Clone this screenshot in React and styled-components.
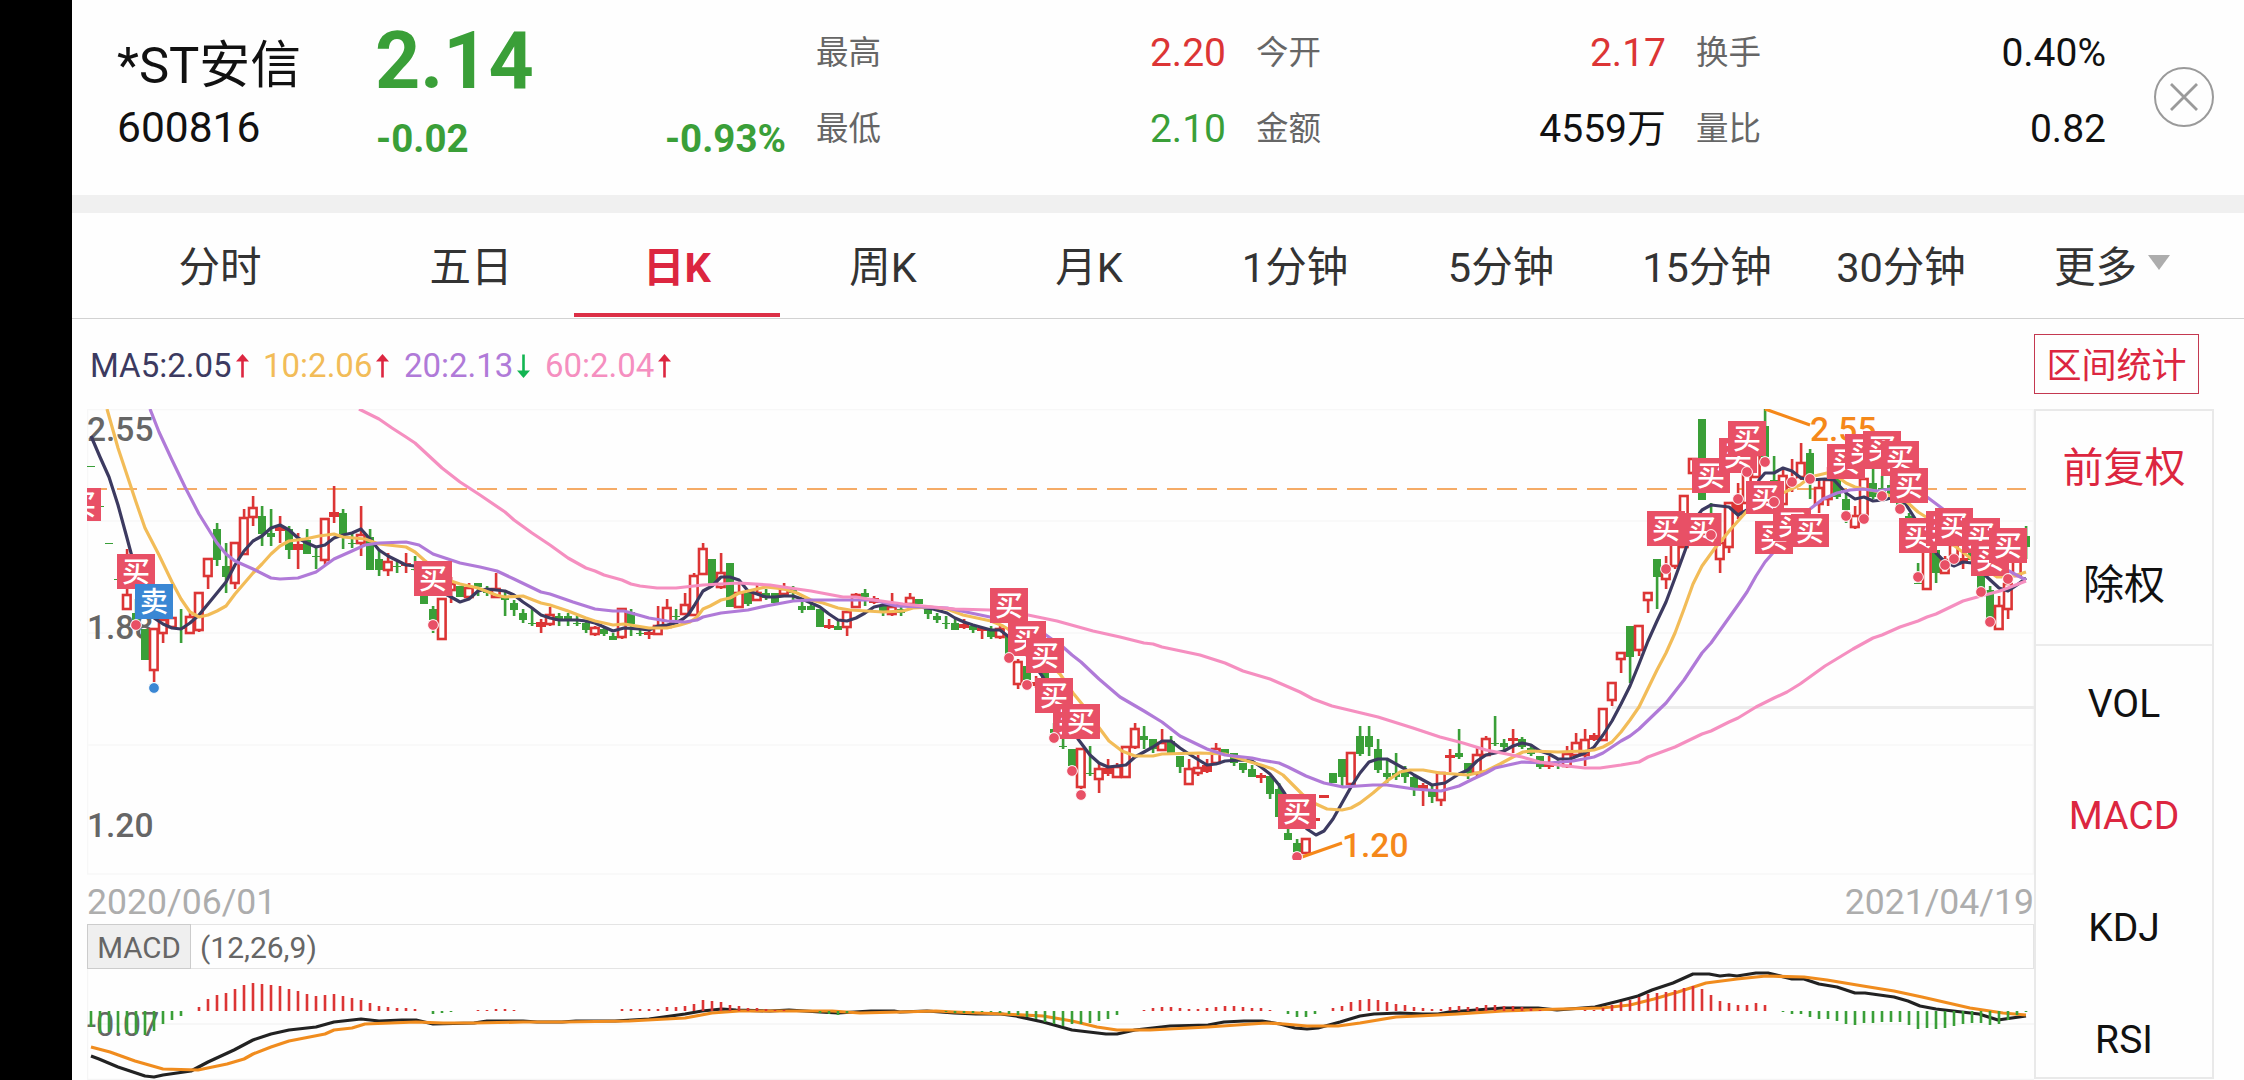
import React from "react";
import styled, { createGlobalStyle } from "styled-components";

const GlobalStyle = createGlobalStyle`
  body {
    margin: 0;
    background: #fff;
    font-family: Roboto, "Noto Sans CJK SC", sans-serif;
    line-height: 1.2;
    color: #111;
  }
  * {
    box-sizing: border-box;
  }
`;

const RED = "#dc3535";
const GREEN = "#3a9f38";
const ACCENT = "#dc2640";
const BUY = "#e85066";
const SELL = "#3a87d4";

const Screen = styled.div`
  width: 2244px;
  height: 1080px;
  padding-left: 72px;
  background: #000;
  overflow: hidden;
`;

const Page = styled.div`
  display: flex;
  flex-direction: column;
  height: 1080px;
  background: #fefefe;
`;

const Header = styled.header`
  display: flex;
  height: 213px;
  padding-left: 45px;
  border-bottom: 18px solid #f0f0f0;
`;

const StockName = styled.div`
  width: 260px;
  padding-top: 36px;
`;

const Name = styled.div`
  font-size: 50.8px;
  line-height: 60px;
  white-space: nowrap;
`;

const Code = styled.div`
  margin-top: 8px;
  font-size: 42.5px;
  line-height: 48px;
`;

const PriceBox = styled.div`
  width: 409px;
  padding-top: 16px;
  color: ${GREEN};
  font-weight: 700;
`;

const Price = styled.div`
  margin-left: -2px;
  font-size: 79px;
  line-height: 90px;
`;

const Change = styled.div`
  display: flex;
  justify-content: space-between;
  margin: 9px 0 0 -1px;
  font-size: 38.5px;
  line-height: 48px;
`;

const Stats = styled.div`
  display: grid;
  grid-template-columns: repeat(3, 410px);
  grid-template-rows: 76px 76px;
  column-gap: 30px;
  margin-left: 30px;
  padding-top: 15px;
`;

const Stat = styled.div`
  display: flex;
  align-items: center;
  justify-content: space-between;
  font-size: 39px;
  color: ${({ $color }) => $color || "#111"};
`;

const StatLabel = styled.span`
  font-size: 32.5px;
  color: #666;
`;

const CloseButton = styled.button`
  width: 60px;
  height: 60px;
  margin: 67px 0 0 48px;
  padding: 0;
  border: 2px solid #9a9a9a;
  border-radius: 50%;
  background: none;

  svg {
    display: block;
    margin: auto;
  }
`;

const Tabs = styled.nav`
  display: flex;
  height: 106px;
  border-bottom: 1px solid #d2d2d2;
`;

const Tab = styled.div`
  display: flex;
  align-items: center;
  justify-content: center;
  width: ${({ $width }) => $width || 206}px;
  height: 104px;
  padding-top: 10px;
  border-bottom: 4px solid transparent;
  font-size: 41.5px;
  color: #333;

  ${({ $active }) =>
    $active &&
    `
    border-color: #dc2f46;
    color: ${ACCENT};
    font-weight: 700;
  `}
`;

const Caret = styled.span`
  margin: -12px 0 0 11px;
  border: 11.5px solid transparent;
  border-top: 15px solid #adadad;
  border-bottom: 0;
`;

const Body = styled.main`
  display: flex;
  flex: 1;
  padding-left: 15px;
`;

const Charts = styled.section`
  width: 1947px;

  svg {
    display: block;
    font-family: Roboto, "Noto Sans CJK SC", sans-serif;
  }
`;

const Legend = styled.div`
  display: flex;
  align-items: center;
  height: 90px;
  padding: 3px 0 0 3px;
  font-size: 33px;
`;

const LegendItem = styled.span`
  display: flex;
  align-items: center;
  gap: 4px;
  margin-right: 14.5px;
  color: ${({ $color }) => $color};
`;

const Dates = styled.div`
  display: flex;
  justify-content: space-between;
  height: 49px;
  padding-top: 5px;
  font-size: 35.6px;
  line-height: 44px;
  color: #adadad;
`;

const IndicatorBar = styled.div`
  display: flex;
  align-items: stretch;
  height: 45px;
  border: 1px solid #e4e4e4;
  font-size: 30px;
  line-height: 45px;
  color: #666;
`;

const IndicatorName = styled.div`
  width: 104px;
  margin: -1px;
  border: 1px solid #ccc;
  background: #efefef;
  font-size: 29.5px;
  line-height: 47px;
  text-align: center;
`;

const IndicatorParams = styled.div`
  padding-left: 10px;
`;

const Side = styled.aside`
  width: 180px;
`;

const RangeButton = styled.div`
  width: 165px;
  height: 60px;
  margin: 15px 0;
  padding-top: 3px;
  border: 1px solid #c43850;
  color: ${ACCENT};
  font-size: 35px;
  line-height: 58px;
  text-align: center;
`;

const Menu = styled.div`
  height: 670px;
  border: 2px solid #e9e9e9;
`;

const MenuGroup = styled.div`
  & + & {
    border-top: 2px solid #ececec;
    padding-top: 2px;
  }
`;

const MenuItem = styled.div`
  display: flex;
  align-items: center;
  justify-content: center;
  height: ${({ $height }) => $height}px;
  font-size: ${({ $size }) => $size}px;
  color: ${({ $active }) => ($active ? ACCENT : "#111")};
`;

const stats = [
  ["最高", "2.20", RED],
  ["今开", "2.17", RED],
  ["换手", "0.40%"],
  ["最低", "2.10", GREEN],
  ["金额", "4559万"],
  ["量比", "0.82"],
];

const tabs = [
  ["分时", 296],
  ["五日"],
  ["日K"],
  ["周K"],
  ["月K"],
  ["1分钟"],
  ["5分钟"],
  ["15分钟"],
  ["30分钟", 182],
];

const legend = [
  ["MA5:2.05", "#3c3a60", true],
  ["10:2.06", "#f2bc58", true],
  ["20:2.13", "#b07ad8", false],
  ["60:2.04", "#f58fc0", true],
];

// one entry per day: kind, high, body top, body bottom, low
// g = falling, r = rising (hollow), f = rising (solid)
const candles = `
g466,466,467,467 g506,506,507,507 g543,543,544,544 g579,579,580,580 r549,595,609,610
g599,613,620,625 g629,629,660,660 r629,629,670,682 r620,620,633,643 r618,618,627,627
g609,628,629,643 r613,617,633,634 r592,593,630,632 r558,559,576,589 g523,529,560,566
g543,566,577,593 r542,543,583,589 r509,518,554,555 r496,508,517,526 g506,516,534,546
g509,533,537,546 f516,527,531,543 g526,529,550,559 f533,544,550,569 g529,540,554,554
g548,556,557,569 r518,519,560,565 f486,512,517,523 g509,513,534,549 g534,543,544,548
r506,535,543,556 g529,537,570,570 g549,559,570,576 r553,562,570,576 g562,566,567,573
f553,563,566,573 g556,569,570,571 g590,590,604,604 g606,609,620,633 r598,599,639,639
r577,584,590,603 g586,586,597,597 r583,588,597,597 g583,583,587,596 g586,590,593,596
r573,589,597,597 g590,597,600,616 g600,603,610,616 g609,613,620,623 g609,623,624,626
f619,622,627,633 r607,615,624,626 g613,616,621,626 g613,616,621,626 g616,623,624,626
g621,623,630,633 r626,628,634,636 g626,629,634,636 g633,636,640,640 r608,609,637,639
g609,612,624,636 g630,633,634,636 f628,632,635,639 r606,626,634,634 r599,608,627,627
g609,616,617,621 r593,605,614,614 r573,576,615,616 r543,549,574,574 g559,559,584,584
r553,573,587,589 g563,563,607,607 r583,593,607,607 g590,593,604,606 r583,593,600,600
g589,593,598,600 g593,593,603,603 r583,589,594,596 g586,589,593,600 g600,606,610,613
g603,606,610,610 g609,609,627,627 f619,625,628,629 g621,626,630,630 r611,612,627,636
r593,595,607,608 g589,593,597,606 f596,598,603,604 g603,606,613,616 r593,607,614,616
g605,609,613,616 r593,598,604,604 g599,599,604,604 g608,609,614,619 g613,616,620,623
g616,623,624,629 g619,623,630,630 f619,624,628,629 g624,626,630,633 f628,628,631,639
g626,630,637,639 r626,629,637,639 g635,635,654,654 r659,662,684,689 g666,666,680,680
f676,682,686,688 g670,670,713,713 g723,729,733,740 g733,746,747,749 g749,749,766,766
r748,749,787,789 g746,773,774,776 r763,769,779,793 f759,768,774,776 r763,767,777,777
r746,747,777,777 r723,729,747,749 g726,736,740,749 g739,739,749,753 r729,743,750,750
g736,741,753,754 g756,756,767,773 r759,769,784,784 r755,768,773,776 f759,765,772,773
r743,749,763,763 g749,749,754,754 g753,753,763,766 g763,763,770,773 g765,769,777,777
f773,775,778,783 g776,776,794,799 g783,789,817,817 g829,833,840,840 g839,843,852,857
r838,839,853,853 f818,818,821,821 f795,795,798,798 g773,773,783,783 g759,759,777,788
r752,753,784,784 g726,736,754,756 g726,736,747,756 g739,749,770,773 g760,773,777,783
g753,773,777,780 g766,770,777,783 g775,777,789,796 f783,785,789,806 g785,789,797,803
r772,773,800,806 f749,755,758,772 g729,753,757,759 g763,763,773,779 r747,755,773,776
r736,739,755,755 g716,743,744,746 g739,743,747,750 f729,738,741,753 g737,739,747,749
g744,748,754,756 g756,756,767,769 f756,763,767,769 g760,764,766,769 r746,754,766,768
r733,743,755,755 r729,740,755,766 f733,735,740,741 r708,709,740,740 r682,683,700,706
r652,653,659,673 g626,626,657,683 r625,626,650,656 r592,593,600,613 g559,559,577,609
r556,572,579,589 r540,540,566,569 r495,496,547,547 r458,459,473,474 g419,419,500,500
g503,515,535,540 r513,543,559,573 r502,503,547,553 f483,503,513,519 r463,463,503,503
r455,455,477,478 g409,426,457,457 g456,480,500,500 r470,476,504,504 f459,478,488,492
r443,463,477,480 g449,453,480,499 r480,488,504,513 r467,480,499,506 g479,479,497,499
g493,499,510,523 r506,516,527,529 r478,479,515,517 g468,483,497,499 g476,488,497,499
g480,485,495,497 g490,495,505,510 g513,516,533,533 g563,583,584,584 r547,548,589,590
g550,550,573,583 r556,560,573,574 r540,545,555,560 f553,558,562,569 g540,545,560,563
g575,575,590,592 g586,590,618,622 r596,606,629,630 r583,584,609,619 r560,560,576,577
g526,536,547,559`
  .trim()
  .split(/\s+/)
  .map((item) => [item[0], ...item.slice(1).split(",").map(Number)]);

const ma5 =
  "91,436 100,457 109,477 118,505 127,538 131,553 142,592 154,618 163,624 172,628 181,629 190,623 199,615 217,593 226,582 235,565 244,551 253,541 262,536 271,528 280,525 289,530 298,538 307,543 316,547 325,545 334,538 343,535 352,533 361,529 370,539 379,550 388,556 406,565 415,566 430,578 442,592 451,597 460,602 469,599 478,591 487,589 496,590 505,591 514,595 523,602 532,608 541,615 550,618 559,620 577,620 586,621 595,623 604,627 613,631 624,628 640,629 649,630 658,626 667,625 676,623 683,619 688,615 694,606 703,591 712,586 721,577 730,577 739,580 748,591 757,594 766,597 775,597 784,596 793,596 802,599 811,603 820,607 829,614 838,620 847,621 856,618 865,613 874,607 883,605 901,605 919,607 933,609 947,613 955,618 964,622 973,625 991,630 1000,630 1009,637 1023,650 1043,677 1063,713 1078,739 1090,755 1099,763 1108,767 1126,765 1135,757 1153,747 1162,741 1171,741 1180,748 1189,754 1207,765 1216,764 1225,761 1240,760 1252,761 1261,767 1270,774 1279,785 1285,794 1298,818 1307,829 1316,835 1324,831 1333,819 1342,803 1351,787 1360,773 1369,762 1378,759 1387,759 1405,769 1414,775 1423,780 1432,785 1445,783 1459,774 1468,770 1477,761 1486,755 1504,751 1513,746 1522,743 1531,745 1540,751 1549,754 1558,759 1570,759 1585,753 1594,747 1603,735 1612,721 1621,704 1630,686 1639,664 1648,641 1657,621 1666,602 1675,578 1686,548 1698,515 1702,510 1711,505 1729,507 1738,515 1747,510 1759,480 1765,473 1774,473 1783,468 1792,471 1801,478 1810,480 1825,479 1834,480 1846,493 1855,499 1864,497 1873,501 1883,500 1895,497 1905,503 1914,517 1936,553 1945,562 1954,566 1963,562 1972,563 1987,577 1999,588 2008,591 2017,585 2026,578";
const ma10 =
  "107,409 118,448 127,475 136,502 145,528 159,555 172,582 181,599 190,612 199,617 208,615 217,611 226,606 235,594 253,573 262,564 271,554 280,546 289,541 305,539 319,536 334,534 343,537 365,539 379,544 406,547 415,552 424,560 451,581 460,584 478,588 496,595 505,597 523,596 541,603 550,605 568,611 586,618 595,621 613,625 624,624 649,628 667,628 680,625 690,622 697,617 703,609 710,606 721,600 730,598 739,593 748,591 766,587 784,589 797,593 811,600 823,603 838,608 850,610 867,611 883,612 903,611 913,608 930,607 947,609 963,615 991,621 1003,626 1008,629 1027,647 1045,660 1060,674 1073,693 1082,704 1100,729 1109,741 1122,751 1135,756 1153,756 1162,754 1200,753 1225,754 1247,761 1261,765 1273,769 1283,775 1302,794 1316,804 1327,809 1342,810 1351,808 1360,803 1373,793 1387,781 1400,772 1410,770 1423,770 1440,773 1468,775 1486,771 1500,764 1513,757 1523,752 1531,751 1558,752 1585,751 1594,750 1603,747 1612,742 1621,732 1630,720 1639,707 1657,670 1666,653 1675,633 1684,609 1693,584 1702,566 1715,548 1722,540 1730,530 1747,511 1760,500 1785,492 1800,485 1810,477 1827,473 1838,477 1846,483 1855,487 1880,492 1907,502 1918,512 1926,517 1947,540 1973,560 1997,577 2007,577 2017,575 2026,572";
const ma20 =
  "150,409 159,432 172,460 185,487 199,514 217,543 226,554 235,561 253,569 271,578 280,579 298,578 316,572 334,559 352,551 365,545 379,543 406,542 419,545 433,554 460,563 480,567 497,571 514,579 541,592 550,594 573,602 595,609 613,611 624,611 649,618 667,621 685,622 697,620 703,617 721,613 748,610 766,606 793,601 811,600 847,600 874,600 897,606 947,608 990,617 1013,620 1046,635 1063,647 1072,655 1081,662 1099,679 1120,697 1144,711 1162,722 1180,736 1207,749 1225,755 1252,758 1261,760 1279,763 1288,767 1306,776 1324,783 1343,787 1373,785 1387,785 1414,789 1441,791 1459,786 1473,779 1486,773 1495,768 1522,762 1549,763 1573,761 1594,757 1603,753 1621,741 1630,736 1639,729 1666,703 1684,680 1702,653 1711,643 1738,605 1747,592 1756,576 1765,562 1772,554 1810,509 1823,499 1837,493 1850,490 1863,489 1877,491 1890,489 1903,490 1927,497 1943,509 1967,527 1987,547 2007,570 2026,580";
const ma60 =
  "359,409 379,419 392,428 406,437 415,443 442,468 460,482 480,495 505,512 514,520 532,533 550,545 568,558 586,568 595,571 604,575 622,580 631,584 640,586 657,588 676,588 703,585 720,584 739,583 770,585 797,589 811,591 843,597 856,597 874,600 903,604 933,607 955,609 990,610 1028,615 1057,621 1093,631 1120,637 1144,643 1153,644 1162,647 1200,655 1225,663 1243,671 1270,679 1300,692 1313,699 1332,706 1353,711 1378,717 1413,728 1440,737 1463,743 1486,750 1522,757 1540,762 1558,765 1585,768 1600,768 1621,765 1639,762 1648,757 1675,747 1702,734 1711,731 1729,722 1738,718 1756,707 1774,698 1787,692 1800,684 1825,666 1853,649 1873,638 1882,635 1900,627 1918,621 1927,617 1936,614 1963,601 1981,596 2000,591 2026,581";
const dif =
  "91,1056 99,1059 118,1067 145,1076 154,1077 163,1075 191,1071 208,1062 234,1050 253,1040 271,1034 289,1030 316,1027 334,1022 361,1019 379,1021 402,1020 416,1020 433,1024 474,1023 487,1021 523,1021 537,1022 562,1022 576,1021 615,1021 649,1019 685,1014 702,1011 722,1009 736,1010 770,1011 789,1010 820,1012 838,1013 871,1011 894,1011 900,1012 927,1011 954,1013 976,1014 1001,1014 1016,1016 1043,1022 1054,1025 1072,1030 1106,1034 1117,1034 1135,1030 1170,1026 1208,1025 1224,1022 1244,1021 1262,1021 1280,1024 1295,1028 1307,1029 1318,1028 1340,1022 1360,1016 1374,1014 1400,1013 1423,1014 1438,1014 1449,1012 1476,1010 1503,1008 1538,1008 1557,1010 1595,1007 1619,1001 1638,996 1652,990 1673,983 1693,974 1709,974 1720,976 1729,975 1737,976 1756,973 1768,973 1792,979 1804,979 1819,984 1837,987 1855,993 1865,993 1894,997 1908,1001 1920,1006 1936,1009 1979,1014 1998,1020 2026,1016";
const dea =
  "91,1047 110,1052 135,1061 163,1069 198,1070 227,1064 244,1059 253,1054 271,1047 289,1041 325,1034 334,1030 352,1028 365,1024 416,1022 443,1023 474,1023 523,1022 562,1022 629,1021 685,1018 712,1013 739,1011 832,1011 860,1013 900,1012 936,1011 954,1012 1003,1014 1043,1016 1072,1021 1097,1027 1117,1030 1150,1030 1208,1027 1266,1023 1284,1024 1307,1026 1338,1026 1360,1023 1396,1017 1458,1014 1503,1011 1528,1010 1562,1009 1602,1008 1630,1005 1654,999 1678,992 1706,983 1737,979 1766,976 1804,977 1827,980 1863,986 1894,991 1922,997 1970,1008 2003,1013 2026,1015";

// histogram runs: [first day, values], positive = above the zero line
const histogram = [
  [0, [-16, -22, -21, -22, -23, -23, -24, -20, -13, -9, -5]],
  [12, [4, 12, 16, 18, 22, 26, 28, 27, 26, 25, 22, 20, 17, 15, 16, 17, 15, 13, 11, 8, 5, 4, 3, 3, 2]],
  [38, [-3, -2, -1]],
  [43, [1, 1, 2, 2, 1]],
  [59, [2, 2, 2, 2, 2, 4, 4, 5, 7, 11, 10, 9, 6, 5, 3, 3, 2, 1, 1]],
  [81, [-2, -3, -4, -2]],
  [95, [-1, -2, -2, -2, -1, -1, -2, -3, -4, -6, -8, -11, -13, -15, -13, -13, -12, -10, -8, -4]],
  [117, [1, 3, 4, 4, 3, 2, 2, 3, 4, 5, 5, 4, 3, 3, 1]],
  [133, [-3, -6, -6, -3]],
  [138, [3, 5, 9, 11, 12, 11, 9, 7, 6, 4, 3, 2, 2, 4, 5, 4, 4, 6, 6, 5, 5, 4, 3, 1]],
  [166, [1, 1, 3, 6, 9, 11, 14, 17, 18, 19, 21, 23, 25, 22, 16, 10, 8, 6, 6, 8, 6]],
  [188, [-1, -3, -3, -6, -8, -8, -10, -13, -14, -12, -12, -11, -11, -11, -14, -18, -17, -18, -17, -15, -13, -12, -12, -14, -13, -9, -4, -1]],
];

// [left, top, height, sell]
const trades = [
  [63, 488, 33],
  [117, 554],
  [135, 584, 35, true],
  [414, 561],
  [990, 588],
  [1008, 621],
  [1026, 638],
  [1035, 678],
  [1053, 704],
  [1062, 704],
  [1278, 794],
  [1647, 511],
  [1683, 513, 33],
  [1692, 458],
  [1719, 438],
  [1728, 421],
  [1746, 481, 33],
  [1755, 521, 33],
  [1773, 508, 33],
  [1791, 514, 33],
  [1827, 444],
  [1845, 434],
  [1863, 431],
  [1881, 441],
  [1890, 468],
  [1899, 518],
  [1926, 511],
  [1935, 508],
  [1962, 518],
  [1971, 541],
  [1989, 528],
];

const dots = [
  [136, 625],
  [154, 688, true],
  [433, 625],
  [1009, 658],
  [1027, 685],
  [1054, 738],
  [1072, 771],
  [1081, 795],
  [1297, 857],
  [1666, 569],
  [1711, 535],
  [1738, 499],
  [1747, 472],
  [1765, 462],
  [1774, 502],
  [1792, 482],
  [1810, 479],
  [1846, 516],
  [1864, 519],
  [1882, 496],
  [1900, 509],
  [1918, 577],
  [1945, 565],
  [1954, 559],
  [1981, 592],
  [1990, 622],
  [2008, 579],
];

const dayX = (i) => 91 + i * 9;

function Arrow({ up }) {
  return (
    <svg width="13" height="24" viewBox="0 0 13 24">
      <g
        transform={up ? undefined : "rotate(180 6.5 12)"}
        fill={up ? "#dc2640" : "#12b552"}
      >
        <path d="M6.5 0 L13 7.5 H0 Z" />
        <rect x="5.2" y="6" width="2.6" height="17.5" />
      </g>
    </svg>
  );
}

function Candle({ x, data }) {
  const [kind, high, top, bottom, low] = data;
  const height = Math.max(bottom - top, 1);
  if (kind === "g") {
    return (
      <g fill={GREEN}>
        <rect x={x - 1.2} y={high} width="2.6" height={Math.max(low - high, 1)} />
        <rect x={x - 4} y={top} width="8" height={height} />
      </g>
    );
  }
  return (
    <g fill={RED}>
      <rect x={x - 1.2} y={high} width="2.6" height={Math.max(top - high, 0)} />
      <rect x={x - 1.2} y={bottom} width="2.6" height={Math.max(low - bottom, 0)} />
      {kind === "f" ? (
        <rect x={x - 5} y={top} width="10" height={height} />
      ) : (
        <rect
          x={x - 4}
          y={top}
          width="7.6"
          height={height}
          fill="#fff"
          stroke={RED}
          strokeWidth="2.6"
        />
      )}
    </g>
  );
}

function PriceChart() {
  return (
    <svg width="1947" height="466" viewBox="87 409 1947 466">
      <clipPath id="plot">
        <rect x="87" y="409" width="1943" height="451" />
      </clipPath>
      <g fill="none" stroke="#f7f7f7" strokeWidth="1.5">
        <rect x="87.5" y="409.5" width="1946" height="464.5" />
        <path d="M87 521H2034M87 633H2034M87 745H2034" />
      </g>
      <path d="M1612 707.5H2034" stroke="#ececec" strokeWidth="3" />
      <g fill="#666" fontSize="33.5" fontWeight="500">
        <text x="87" y="441">2.55</text>
        <text x="87" y="638.5">1.88</text>
        <text x="87" y="837">1.20</text>
      </g>
      <path
        d="M87 489H2026"
        stroke="#f5ab66"
        strokeWidth="2"
        strokeDasharray="20 10"
      />
      <g clipPath="url(#plot)">
        {candles.map((data, i) => (
          <Candle key={i} x={dayX(i)} data={data} />
        ))}
        <g fill="none" strokeWidth="3.2" strokeLinejoin="round">
          <polyline points={ma5} stroke="#3c3a60" />
          <polyline points={ma10} stroke="#f2bc58" />
          <polyline points={ma20} stroke="#b07ad8" />
          <polyline points={ma60} stroke="#f58fc0" />
        </g>
        <g stroke="#f5881a" strokeWidth="3.2">
          <path d="M1765 409L1810 425M1302 857L1342 843" />
        </g>
        <g fill="#f5881a" fontSize="33.5" fontWeight="500">
          <text x="1810" y="441">2.55</text>
          <text x="1342" y="857">1.20</text>
        </g>
        {trades.map(([x, y, h = 35, sell], i) => (
          <g key={i}>
            <rect x={x} y={y} width="38" height={h} fill={sell ? SELL : BUY} />
            <text
              x={x + 19}
              y={y + h / 2 + (sell ? 10 : 10.8)}
              fill="#fff"
              fontSize="28"
              fontWeight="500"
              textAnchor="middle"
            >
              {sell ? "卖" : "买"}
            </text>
          </g>
        ))}
        {dots.map(([x, y, sell], i) => (
          <circle
            key={i}
            cx={x}
            cy={y}
            r="5.4"
            fill={sell ? SELL : BUY}
            stroke="#fff"
            strokeWidth="1"
          />
        ))}
      </g>
    </svg>
  );
}

function MacdChart() {
  return (
    <svg width="1947" height="111" viewBox="87 969 1947 111">
      <g stroke="#f5f5f5" strokeWidth="1.5">
        <path d="M87 1024H2034M87 1079.5H2034M87.5 969V1080" />
      </g>
      <text x="87" y="1036" fill="#666" fontSize="32.5">
        -0.07
      </text>
      <g fill="none" strokeWidth="3.2" strokeLinejoin="round">
        <polyline points={dif} stroke="#222" />
        <polyline points={dea} stroke="#f08c1e" />
      </g>
      {histogram.map(([start, values]) =>
        values.map((v, k) => (
          <rect
            key={start + k}
            x={dayX(start + k) - 1.3}
            y={v > 0 ? 1011 - v : 1011}
            width="2.6"
            height={Math.abs(v)}
            fill={v > 0 ? RED : GREEN}
          />
        ))
      )}
    </svg>
  );
}

function App() {
  return (
    <Screen>
      <GlobalStyle />
      <Page>
        <Header>
          <StockName>
            <Name>*ST安信</Name>
            <Code>600816</Code>
          </StockName>
          <PriceBox>
            <Price>2.14</Price>
            <Change>
              <span>-0.02</span>
              <span>-0.93%</span>
            </Change>
          </PriceBox>
          <Stats>
            {stats.map(([label, value, color]) => (
              <Stat key={label} $color={color}>
                <StatLabel>{label}</StatLabel>
                {value}
              </Stat>
            ))}
          </Stats>
          <CloseButton>
            <svg width="28" height="28" viewBox="0 0 28 28">
              <path d="M1 1L27 27M27 1L1 27" stroke="#9a9a9a" strokeWidth="2.8" />
            </svg>
          </CloseButton>
        </Header>

        <Tabs>
          {tabs.map(([label, width]) => (
            <Tab key={label} $width={width} $active={label === "日K"}>
              {label}
            </Tab>
          ))}
          <Tab $width={240}>
            更多
            <Caret />
          </Tab>
        </Tabs>

        <Body>
          <Charts>
            <Legend>
              {legend.map(([label, color, up]) => (
                <LegendItem key={label} $color={color}>
                  {label}
                  <Arrow up={up} />
                </LegendItem>
              ))}
            </Legend>
            <PriceChart />
            <Dates>
              <span>2020/06/01</span>
              <span>2021/04/19</span>
            </Dates>
            <IndicatorBar>
              <IndicatorName>MACD</IndicatorName>
              <IndicatorParams>(12,26,9)</IndicatorParams>
            </IndicatorBar>
            <MacdChart />
          </Charts>

          <Side>
            <RangeButton>区间统计</RangeButton>
            <Menu>
              <MenuGroup>
                <MenuItem $height={116} $size={41} $active>
                  前复权
                </MenuItem>
                <MenuItem $height={117} $size={41}>
                  除权
                </MenuItem>
              </MenuGroup>
              <MenuGroup>
                {["VOL", "MACD", "KDJ", "RSI"].map((name) => (
                  <MenuItem
                    key={name}
                    $height={112}
                    $size={39}
                    $active={name === "MACD"}
                  >
                    {name}
                  </MenuItem>
                ))}
              </MenuGroup>
            </Menu>
          </Side>
        </Body>
      </Page>
    </Screen>
  );
}

export default App;
